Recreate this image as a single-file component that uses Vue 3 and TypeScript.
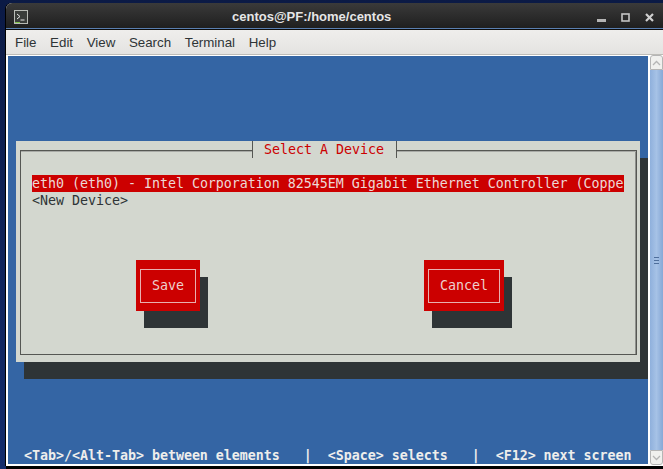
<script setup lang="ts">
const menus: string[] = ['File', 'Edit', 'View', 'Search', 'Terminal', 'Help']
const statusLine: string = '<Tab>/<Alt-Tab> between elements   |  <Space> selects   |  <F12> next screen'
</script>

<template>
  <div class="desktop">
    <div class="window">
      <header class="titlebar">
        <svg class="app-icon" width="14" height="14" viewBox="0 0 14 14">
          <rect x="0.5" y="0.5" width="13" height="13" fill="#3a3d3a" stroke="#b9bcb6" />
          <path d="M3 4l3 2.5L3 9M6.5 10h4" fill="none" stroke="#e6e6e6" stroke-width="1" />
          <path d="M1 12.5h5" stroke="#7fc34a" stroke-width="1" />
        </svg>
        <span class="title">centos@PF:/home/centos</span>
        <div class="controls">
          <svg width="9" height="3" viewBox="0 0 9 3"><rect width="9" height="3" fill="#b4b4b4" /></svg>
          <svg width="9" height="9" viewBox="0 0 9 9"><rect x="1" y="1" width="7" height="7" fill="none" stroke="#c4c4c4" stroke-width="1.6" /></svg>
          <svg width="9" height="9" viewBox="0 0 9 9"><path d="M1 1l7 7M8 1l-7 7" stroke="#cfcfcf" stroke-width="2.2" /></svg>
        </div>
      </header>
      <nav class="menubar">
        <span v-for="m in menus" :key="m" class="menu">{{ m }}</span>
      </nav>
      <div class="body">
        <main class="terminal">
          <section class="dialog">
            <div class="frame">
              <h1 class="dialog-title">Select A Device</h1>
              <ul class="list">
                <li class="selected">eth0 (eth0) - Intel Corporation 82545EM Gigabit Ethernet Controller (Coppe</li>
                <li>&lt;New Device&gt;</li>
              </ul>
              <div class="buttons">
                <button class="btn save"><span>Save</span></button>
                <button class="btn cancel"><span>Cancel</span></button>
              </div>
            </div>
          </section>
          <footer class="status" v-text="statusLine"></footer>
        </main>
        <aside class="scrollbar">
          <div class="arrow up"><svg width="9" height="6" viewBox="0 0 9 6"><path d="M1 5l3.5-3.5L8 5" fill="none" stroke="#b5b5b5" stroke-width="1.3" /></svg></div>
          <div class="thumb"><i></i><i></i><i></i></div>
          <div class="arrow down"><svg width="9" height="6" viewBox="0 0 9 6"><path d="M1 1l3.5 3.5L8 1" fill="none" stroke="#b5b5b5" stroke-width="1.3" /></svg></div>
        </aside>
      </div>
    </div>
  </div>
</template>

<style scoped>
.desktop {
  width: 663px;
  height: 469px;
  overflow: hidden;
  background: linear-gradient(#0b1a45, #132c6c);
  padding: 3px 0 0 6px;
  box-sizing: border-box;
}
.window {
  width: 657px;
  height: 463px;
  background: #ffffff;
  border-radius: 6px 0 0 0;
  overflow: hidden;
  box-shadow: -1px 0 0 #000, 0 3px 0 #000;
  display: flex;
  flex-direction: column;
}
.titlebar {
  height: 27px;
  flex: none;
  display: flex;
  align-items: center;
  position: relative;
  background: linear-gradient(#3a3a3a 0, #1f1f1f 25px, #5a7fb0 25px, #5a7fb0 26px, #0c0c0c 26px);
}
.app-icon {
  margin: 1px 0 0 8px;
}
.title {
  position: absolute;
  left: 226px;
  top: 6px;
  font: bold 13px "Liberation Sans", sans-serif;
  color: #e6e6e6;
}
.controls {
  margin: 1px 9px 0 auto;
  display: flex;
  align-items: flex-end;
  gap: 15px;
}
.menubar {
  height: 25px;
  flex: none;
  display: flex;
  align-items: center;
  gap: 13.6px;
  padding-left: 9px;
  background: linear-gradient(#efeeec, #e4e3e1);
  border-bottom: 1px solid #bdbcb8;
  box-sizing: border-box;
  font: 13.33px "Liberation Sans", sans-serif;
  color: #2e3436;
}
.body {
  flex: 1;
  display: flex;
  padding-left: 2px;
  min-height: 0;
}
.terminal {
  width: 640px;
  height: 408px;
  margin-top: 1px;
  flex: none;
  background: #3465a4;
  font: 13.33px "DejaVu Sans Mono", monospace;
  letter-spacing: -0.03px;
  line-height: 17px;
  white-space: pre;
  padding: 85px 0 0 8px;
  box-sizing: border-box;
  display: flex;
  flex-direction: column;
}
.dialog {
  width: 624px;
  height: 221px;
  flex: none;
  background: #d3d7cf;
  box-shadow: 8px 17px 0 #2e3436;
  padding: 9px 3px 7px 4px;
  box-sizing: border-box;
}
.frame {
  height: 100%;
  border: 1px solid #555753;
  box-shadow: inset 0 1px 0 #a8aaa6, inset -1px 0 0 #8f918d;
  box-sizing: border-box;
  position: relative;
  padding: 24px 0 0 11px;
}
.dialog-title {
  position: absolute;
  left: 231px;
  top: -10px;
  margin: 0;
  padding: 0 12px 0 11px;
  height: 17px;
  font: inherit;
  letter-spacing: inherit;
  color: #cc0000;
  background: #d3d7cf;
  border-left: 1px solid #555753;
  border-right: 1px solid #555753;
}
.list {
  list-style: none;
  margin: 0;
  padding: 0;
  color: #2e3436;
}
.selected {
  width: 592px;
  background: #cc0000;
  color: #ecd8d6;
  overflow: hidden;
}
.buttons {
  display: flex;
  margin: 51px 0 0 104px;
  gap: 224px;
}
.btn {
  height: 51px;
  background: #cc0000;
  border: 0;
  padding: 9px 4px 8px 4px;
  box-shadow: 8px 17px 0 #2e3436;
  font: inherit;
  letter-spacing: inherit;
  color: #ecd0ce;
  box-sizing: border-box;
}
.btn span {
  display: block;
  height: 100%;
  border: 1px solid #e8b0b0;
  box-sizing: border-box;
  padding-top: 7px;
  line-height: 17px;
  text-align: center;
}
.save {
  width: 64px;
}
.cancel {
  width: 80px;
}
.status {
  margin-top: auto;
  margin-left: 8px;
  color: #eeeeec;
  font-weight: bold;
}
.scrollbar {
  width: 15px;
  height: 410px;
  flex: none;
  padding-left: 2px;
  box-sizing: border-box;
  background: #fff;
  display: flex;
  flex-direction: column;
}
.arrow {
  height: 15px;
  flex: none;
  background: #f0f0ee;
  border: 1px solid #b5b5b5;
  border-radius: 3px 3px 0 0;
  display: flex;
  align-items: center;
  justify-content: center;
  box-sizing: border-box;
}
.arrow.down {
  border-radius: 0 0 3px 3px;
}
.thumb {
  flex: 1;
  background: linear-gradient(90deg, #8fb0dc, #a6c2e6 50%, #86a8d6);
  display: flex;
  flex-direction: column;
  justify-content: center;
  align-items: center;
  gap: 2px;
}
.thumb i {
  display: block;
  width: 5px;
  height: 1px;
  background: #4f6f9c;
}
</style>

<style>
body {
  margin: 0;
}
</style>
